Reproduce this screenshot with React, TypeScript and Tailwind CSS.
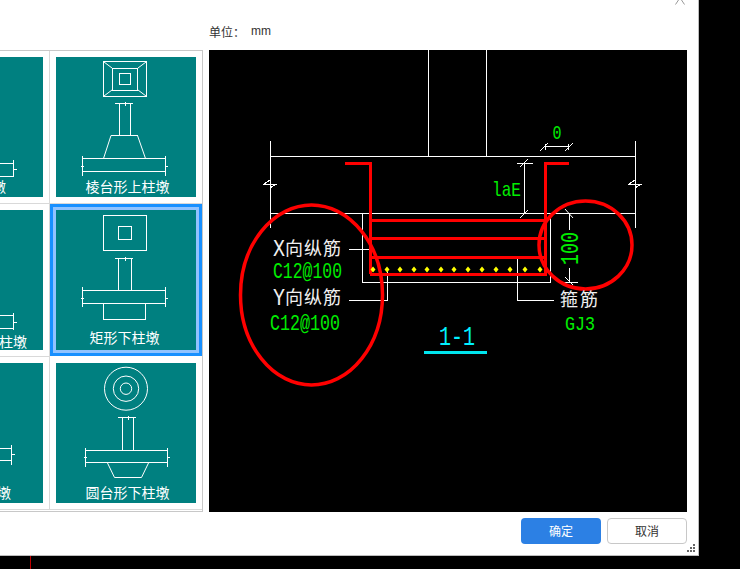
import React from "react";

const CJK = "font-['Noto_Sans_CJK_SC','Liberation_Sans',sans-serif]";
const S = { stroke: "#fff", strokeWidth: 1, fill: "none", shapeRendering: "crispEdges" as const };

function Icon({ y, x = 56, children }: { y: number; x?: number; children: React.ReactNode }) {
  return (
    <svg className="block w-[140px] h-[120px] shrink-0" viewBox={`${x} ${y} 140 120`}>
      {children}
    </svg>
  );
}

function Pier({ cx0, cx1, capL, capR, top, bottom, sl, sr, st, sb, vt, vb }: any) {
  const mid = Math.round((cx0 + cx1) / 2) + 0.5;
  const t = (sb + st) / 2 + 1;
  return (
    <g {...S}>
      <path d={`M${capL} ${top}H${capR}M${mid} ${top - 2}V${top + 2}M${cx0} ${top}V${bottom}M${cx1} ${top}V${bottom}`} />
      <path d={`M${sl} ${st}H${sr}M${sl} ${sb}H${sr}M${sl} ${vt}V${vb}M${sr} ${vt}V${vb}M${sl - 2} ${t}H${sl + 1}M${sr - 1} ${t}H${sr + 2}`} />
    </g>
  );
}

function LeftSlab({ y, x, t, b, vt, vb, tick }: { y: number; x: number; t: number; b: number; vt: number; vb: number; tick: number }) {
  return (
    <Icon y={y} x={-97}>
      <path {...S} d={`M-97 ${t}H${x}M-97 ${b}H${x}M${x} ${vt}V${vb}M${x - 1} ${tick}H${x + 3}`} />
    </Icon>
  );
}

function Card({ label, icon, labelClass = "" }: { label: string; icon: React.ReactNode; labelClass?: string }) {
  return (
    <div className="w-[140px] h-[140px] bg-[#008080] overflow-hidden">
      {icon}
      <div className={`h-[20px] leading-[20px] text-[14px] text-white whitespace-nowrap text-center ${CJK} ${labelClass}`}>
        {label}
      </div>
    </div>
  );
}

function Cell({ selected, children }: { selected?: boolean; children: React.ReactNode }) {
  return (
    <div
      className={
        selected
          ? "w-[152px] h-[152px] mb-[1px] shrink-0 flex items-center justify-center border-[3px] border-[#1890ff] bg-[#91c3ff]"
          : "w-[152px] h-[153px] shrink-0 flex items-center justify-center bg-white border-b border-[#d9d9d9]"
      }
    >
      {children}
    </div>
  );
}

function Break({ x, y }: { x: number; y: number }) {
  return <path {...S} d={`M${x - 7} ${y}H${x + 7}M${x - 6} ${y}L${x} ${y - 4}M${x + 6} ${y}L${x} ${y + 4}`} />;
}

function Tick({ x, y }: { x: number; y: number }) {
  return <path stroke="#fff" fill="none" d={`M${x - 4} ${y + 4}L${x + 4} ${y - 4}`} />;
}

const DOTS = [373, 387, 400, 414, 427, 441, 454, 468, 482, 496, 510, 525, 540];
const MONO = "'Liberation Mono',monospace";
const CN = "'Noto Sans CJK SC',sans-serif";

function Drawing() {
  return (
    <svg className="block w-[478px] h-[462px]" viewBox="209 50 478 462">
      <g {...S}>
        <path d="M428.5 50V156M486.5 50V156" />
        <path d="M270.5 141V228M635.5 141V228M270 156.5H636M270 213.5H636" />
        <path d="M362.5 213V282.5H550.5V213" />
        <path d="M349 249.5H371M349 300.5H387.5V270M517.5 259V300.5H554" />
        <path d="M524.5 163V213M517 163.5H533" />
        <path d="M545 146.5H569M545.5 144V150M568.5 144V150" />
        <path d="M569.5 213V230M569.5 268V282M562 282.5H578" />
        <Break x={270} y={184} />
        <Break x={635} y={184} />
      </g>
      <Tick x={544} y={147} />
      <Tick x={569} y={147} />
      <Tick x={524} y={163} />
      <Tick x={524} y={214} />
      <path stroke="#fff" fill="none" d="M565 209L573 218M565 277L573 285" />
      <g stroke="#ff0000" strokeWidth={3} fill="none" shapeRendering="crispEdges">
        <path d="M345 163.5H370.5V274M569 163.5H545.5V274" />
        <path d="M370 220.5H545M370 238.5H545M370 257.5H545M370 274H547" />
      </g>
      {DOTS.map((x) => (
        <path key={x} d={`M${x} 266.5L${x + 2.5} 269.5L${x} 272.5L${x - 2.5} 269.5Z`} fill="#ffff00" />
      ))}
      <ellipse cx={311.5} cy={295} rx={71} ry={90} stroke="#ff0000" strokeWidth={3.5} fill="none" />
      <ellipse cx={585.5} cy={245} rx={46.5} ry={44} stroke="#ff0000" strokeWidth={3.5} fill="none" />

      <g fill="#00ee00" fontFamily={MONO} fontSize={21} lengthAdjust="spacingAndGlyphs">
        <text x={552.5} y={139} textLength={9} lengthAdjust="spacingAndGlyphs">0</text>
        <text x={492} y={196} textLength={29} lengthAdjust="spacingAndGlyphs">laE</text>
        <text x={273} y={278} textLength={69} lengthAdjust="spacingAndGlyphs" fontSize={22}>C12@100</text>
        <text x={270} y={330} textLength={70} lengthAdjust="spacingAndGlyphs" fontSize={22}>C12@100</text>
        <text x={565} y={330} textLength={30} lengthAdjust="spacingAndGlyphs">GJ3</text>
        <text transform="translate(578 265) rotate(-90)" textLength={33} lengthAdjust="spacingAndGlyphs" fontSize={25}>100</text>
      </g>
      <g fill="#f0f0f0">
        <text x={273} y={256} fontFamily={MONO} fontSize={23} textLength={12} lengthAdjust="spacingAndGlyphs">X</text>
        <text x={285} y={255} fontFamily={CN} fontSize={18} letterSpacing={1}>向纵筋</text>
        <text x={273} y={305} fontFamily={MONO} fontSize={23} textLength={12} lengthAdjust="spacingAndGlyphs">Y</text>
        <text x={285} y={304} fontFamily={CN} fontSize={18} letterSpacing={1}>向纵筋</text>
        <text x={560} y={306} fontFamily={CN} fontSize={18} letterSpacing={2}>箍筋</text>
      </g>
      <text x={439} y={345} fill="#00f0ff" fontFamily={MONO} fontSize={28} textLength={36} lengthAdjust="spacingAndGlyphs">1-1</text>
      <rect x={424} y={351} width={63} height={3} fill="#00e5ee" />
    </svg>
  );
}

export default function App() {
  return (
    <div className={`relative w-[740px] h-[569px] bg-black overflow-hidden ${CJK}`}>
      <div className="relative w-[699px] h-[556px] bg-white border-r border-b border-[#bdbdbd] flex flex-col">
        <svg className="absolute left-[674px] top-0 w-[12px] h-[5px]" viewBox="0 0 12 5">
          <path d="M1.5 4.5L4.5 0M10.5 4.5L7.5 0" stroke="#999" fill="none" />
        </svg>

        <div className="flex items-start h-[512px]">
          <div className="mt-[50px] w-[203px] h-[462px] overflow-hidden border-t border-r border-b border-[#c8c8c8] flex justify-end items-start">
            <div className="shrink-0 flex">
              <div className="flex flex-col border-r border-[#d9d9d9]">
                <Cell>
                  <Card
                    label="矩形上柱墩"
                    labelClass="!text-right pr-[37px] -mt-[1px]"
                    icon={<LeftSlab y={57} x={13.5} t={163.5} b={176.5} vt={160} vb={180} tick={169.5} />}
                  />
                </Cell>
                <Cell>
                  <Card
                    label="棱台形下柱墩"
                    labelClass="!text-right pr-[16px] mt-[1px]"
                    icon={<LeftSlab y={210} x={13.5} t={315.5} b={328.5} vt={313} vb={333} tick={322.5} />}
                  />
                </Cell>
                <Cell>
                  <Card
                    label="圆形上柱墩"
                    labelClass="!text-right pr-[32px] -mt-[1px]"
                    icon={<LeftSlab y={363} x={11.5} t={448.5} b={460.5} vt={445} vb={465} tick={454.5} />}
                  />
                </Cell>
              </div>
              <div className="flex flex-col">
                <Cell>
                  <Card
                    label="棱台形上柱墩"
                    labelClass="pl-[3px] -mt-[1px]"
                    icon={
                      <Icon y={57}>
                        <g {...S}>
                          <path d="M103.5 61.5H146.5V96.5H103.5ZM112.5 68.5H137.5V90.5H112.5ZM119.5 73.5H130.5V84.5H119.5Z" />
                        </g>
                        <path d="M104 62L112 68M146 62L138 68M104 96L112 90M146 96L138 90" stroke="#fff" fill="none" />
                        <Pier cx0={119.5} cx1={130.5} capL={115} capR={133} top={103.5} bottom={135.5} sl={82.5} sr={165.5} st={158.5} sb={171.5} vt={156} vb={176} />
                        <path d="M111 135.5H138M111 135.5L103.5 158.5M137.5 135.5L145.5 158.5" stroke="#fff" fill="none" />
                      </Icon>
                    }
                  />
                </Cell>
                <Cell selected>
                  <Card
                    label="矩形下柱墩"
                    labelClass="pr-[3px] -mt-[3px]"
                    icon={
                      <Icon y={210}>
                        <g {...S}>
                          <path d="M103.5 215.5H146.5V250.5H103.5ZM118.5 226.5H131.5V239.5H118.5Z" />
                          <path d="M103.5 303.5V319.5H145.5V303.5" />
                        </g>
                        <Pier cx0={118.5} cx1={131.5} capL={115} capR={133} top={258.5} bottom={290.5} sl={82.5} sr={165.5} st={290.5} sb={303.5} vt={287} vb={307} />
                      </Icon>
                    }
                  />
                </Cell>
                <Cell>
                  <Card
                    label="圆台形下柱墩"
                    labelClass="pl-[3px] -mt-[1px]"
                    icon={
                      <Icon y={363}>
                        <g stroke="#fff" fill="none">
                          <circle cx={126} cy={388.7} r={21.5} />
                          <circle cx={126} cy={388.7} r={12.7} />
                          <circle cx={126} cy={388.7} r={5.7} />
                          <path d="M107.5 463L114.5 477.5H141.5L148.5 463" />
                        </g>
                        <Pier cx0={122.5} cx1={133.5} capL={118} capR={136} top={417.5} bottom={450.5} sl={85.5} sr={167.5} st={450.5} sb={462.5} vt={448} vb={467} />
                      </Icon>
                    }
                  />
                </Cell>
              </div>
            </div>
          </div>

          <div className="ml-[6px] flex flex-col">
            <div className="h-[50px] pt-[23px] text-[12px] leading-[17px] text-[#333] flex">
              <span>单位：</span>
              <span className="ml-[6px] font-['Liberation_Sans',sans-serif]">mm</span>
            </div>
            <div className="bg-black w-[478px] h-[462px]">
              <Drawing />
            </div>
          </div>
        </div>

        <div className="flex justify-end gap-[6px] pt-[6px] pr-[11px]">
          <button className="w-[80px] h-[26px] rounded-[4px] bg-[#2c80e4] text-white text-[12px] leading-none">确定</button>
          <button className="w-[80px] h-[26px] rounded-[4px] bg-white border border-[#c8c8c8] text-[#333] text-[12px] leading-none">取消</button>
        </div>

        <svg className="absolute left-[687px] top-[544px] w-[8px] h-[8px]" viewBox="0 0 8 8">
          <path d="M6 0h2v2H6zM3 3h2v2H3zM6 3h2v2H6zM0 6h2v2H0zM3 6h2v2H3zM6 6h2v2H6z" fill="#666" />
        </svg>
      </div>
      <div className="w-px h-[13px] ml-[30px] bg-[#c00000]" />
    </div>
  );
}
